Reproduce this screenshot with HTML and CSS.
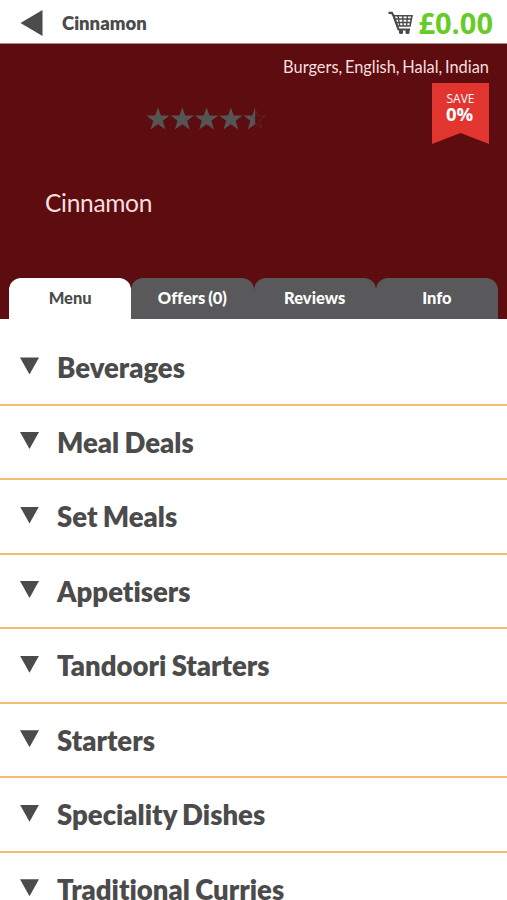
FILE: index.html
```html
<!DOCTYPE html>
<html lang="en">
<head>
    <meta charset="UTF-8">
    <meta name="viewport" content="width=device-width, initial-scale=1.0">
    <title>Cinnamon</title>
    <link rel="stylesheet" href="styles.css">
</head>
<body>
    <header class="topbar">
        <svg class="back" viewBox="0 0 22 26"><path d="M0 13L22 0v26z"/></svg>
        <h1 class="title">Cinnamon</h1>
        <div class="basket">
            <svg class="cart" viewBox="0 0 26 24">
                <path d="M0.500 1.800h3.300l1.700 2.700 5 14h11.500" fill="none" stroke="#4b4b4b" stroke-width="2.200"/>
                <path d="M5.500 4.700h18.500l-2 10.300H9.200z" fill="none" stroke="#4b4b4b" stroke-width="1.600"/>
                <path d="M7 8h16.500M8 11.500h15M10 5l1.800 10M14.800 5l.4 10M19.500 5l-1 10" fill="none" stroke="#4b4b4b" stroke-width="1.400"/>
                <rect x="11" y="18" width="4" height="5" rx="1.500"/>
                <rect x="17.500" y="18" width="4" height="5" rx="1.500"/>
            </svg>
            <span class="total">£0.00</span>
        </div>
    </header>

    <section class="hero">
        <p class="cuisines">Burgers, English, Halal, Indian</p>
        <div class="rating-row">
            <svg class="stars" viewBox="0 0 122 24">
                <defs>
                    <path id="star" d="M12 0.500l2.900 7.900h8.800l-6.900 5.300 2.600 8.700-7.400-5.100-7.400 5.100 2.600-8.700L0.300 8.400h8.800z"/>
                </defs>
                <use href="#star"/>
                <use href="#star" x="24.300"/>
                <use href="#star" x="48.600"/>
                <use href="#star" x="72.900"/>
                <path d="M109.200 0.500v16.800l-7.400 5.100 2.600-8.700-6.900-5.300h8.800z"/>
                <path class="outline" d="M109.200 1.500l2.600 7.500h7.500l-6 4.700 2.300 7.300-6.400-4.500"/>
            </svg>
            <div class="ribbon">
                <span class="save">SAVE</span>
                <span class="percent">0%</span>
            </div>
        </div>
        <h2 class="name">Cinnamon</h2>
        <nav class="tabs">
            <a class="tab active">Menu</a>
            <a class="tab">Offers (0)</a>
            <a class="tab">Reviews</a>
            <a class="tab">Info</a>
        </nav>
    </section>

    <ul class="categories">
        <li class="category">Beverages</li>
        <li class="category">Meal Deals</li>
        <li class="category">Set Meals</li>
        <li class="category">Appetisers</li>
        <li class="category">Tandoori Starters</li>
        <li class="category">Starters</li>
        <li class="category">Speciality Dishes</li>
        <li class="category">Traditional Curries</li>
    </ul>
</body>
</html>
```

FILE: styles.css
```css
* {
    box-sizing: border-box;
}
body {
    margin: 0;
    height: 900px;
    overflow: hidden;
    font-family: 'Lato', sans-serif;
    font-variant-ligatures: none;
    color: #4b4b4b;
    background: #fff;
}
h1, h2, p, ul {
    margin: 0;
    padding: 0;
}
.topbar {
    display: flex;
    align-items: center;
    height: 44px;
    padding: 2px 14px 0 20px;
    border-bottom: 1px solid #a98b8c;
}
.back {
    width: 23px;
    height: 26px;
    fill: #4b4b4b;
}
.title {
    margin-left: 19px;
    font-size: 18.500px;
    font-weight: 800;
    line-height: 24px;
}
.basket {
    display: flex;
    align-items: center;
    margin-left: auto;
}
.cart {
    width: 26px;
    height: 24px;
    margin-right: 4px;
    fill: #4b4b4b;
}
.total {
    font-family: 'Open Sans', sans-serif;
    font-size: 29px;
    font-weight: 700;
    line-height: 40px;
    color: #66cc28;
}
.hero {
    display: flex;
    flex-direction: column;
    height: 275px;
    background: #5d0c10;
}
.cuisines {
    margin: 13px 18px 0 0;
    text-align: right;
    font-size: 16.400px;
    line-height: 20px;
    word-spacing: -1.500px;
    color: #f6dfdf;
}
.rating-row {
    display: flex;
    justify-content: space-between;
    align-items: flex-start;
    margin-top: 6px;
    padding: 0 18px 0 146px;
}
.stars {
    width: 122px;
    height: 24px;
    margin-top: 24px;
    fill: #575554;
}
.outline {
    fill: none;
    stroke: #5b2526;
}
.ribbon {
    display: flex;
    flex-direction: column;
    align-items: center;
    width: 57px;
    height: 61px;
    padding-top: 8px;
    font-family: 'Open Sans', sans-serif;
    color: #fff;
    background: #e23530;
    clip-path: polygon(0 0, 100% 0, 100% 100%, 50% 82%, 0 100%);
}
.save {
    font-size: 12px;
    line-height: 15px;
}
.percent {
    margin-right: 2px;
    font-size: 18.500px;
    font-weight: 700;
    line-height: 16px;
}
.name {
    margin: 44px 0 0 45px;
    font-size: 24.500px;
    font-weight: 400;
    line-height: 30px;
    letter-spacing: -0.300px;
    color: #f6dfdf;
}
.tabs {
    display: flex;
    margin: auto 9px 0;
}
.tab {
    flex: 1;
    height: 41px;
    border-radius: 12px 12px 0 0;
    text-align: center;
    font-size: 16.500px;
    font-weight: 900;
    line-height: 40px;
    word-spacing: -1px;
    color: #fff;
    background: #59595b;
}
.tab.active {
    color: #4b4b4b;
    background: #fff;
}
.categories {
    padding-top: 12.200px;
    list-style: none;
}
.category {
    display: flex;
    align-items: center;
    height: 74.550px;
    padding-left: 20px;
    border-bottom: 2px solid #f2bd77;
    font-size: 27.500px;
    font-weight: 800;
    word-spacing: -1px;
}
.category::before {
    content: '';
    width: 19px;
    height: 17px;
    margin: -3px 18px 0 0;
    background: #4b4b4b;
    clip-path: polygon(0 0, 100% 0, 50% 100%);
}
```
